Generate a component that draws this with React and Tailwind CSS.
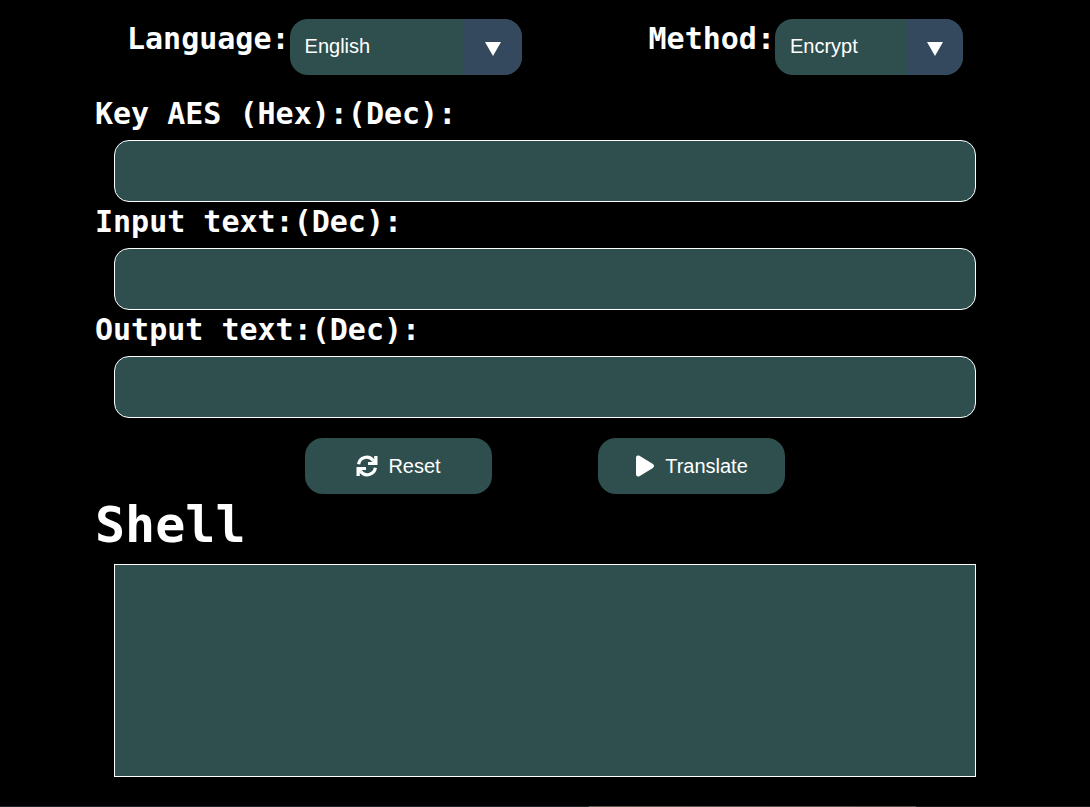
import { FaPlay } from "react-icons/fa6";

const mono = "font-['DejaVu_Sans_Mono',monospace] font-bold text-white";
const sans = "font-['Liberation_Sans',Arial,sans-serif] text-xl text-white";

function SyncIcon(props) {
  return (
    <svg viewBox="0 0 22 22" fill="none" {...props}>
      <path d="M2.6 9.2a8.2 8.2 0 0 1 14.6-3.7" stroke="currentColor" strokeWidth="3.2" />
      <path d="M21.5 1v9H12V7h3.6l2.6-2.6V1z" fill="currentColor" />
      <path d="M19.4 12.8a8.2 8.2 0 0 1-14.6 3.7" stroke="currentColor" strokeWidth="3.2" />
      <path d="M.5 21v-9H10v3H6.4l-2.6 2.6V21z" fill="currentColor" />
    </svg>
  );
}

function Dropdown({ id, label, options, width, arrowWidth }) {
  return (
    <div className="flex items-start">
      <label htmlFor={id} className={`${mono} text-[30px] leading-10`}>
        {label}
      </label>
      <div className={`relative h-14 overflow-hidden rounded-[18px] ${width}`}>
        <select
          id={id}
          className={`${sans} h-full w-full appearance-none bg-[#2f4f4f] px-[15px] pb-[2px] outline-none`}
        >
          {options.map((o) => (
            <option key={o}>{o}</option>
          ))}
        </select>
        <span
          aria-hidden="true"
          className={`pointer-events-none absolute inset-y-0 right-0 flex items-center justify-center bg-[#34495e] pt-1 ${arrowWidth}`}
        >
          <svg viewBox="0 0 16 14" className="h-[14px] w-4 fill-white">
            <path d="M0 0h16L8 14z" />
          </svg>
        </span>
      </div>
    </div>
  );
}

function Field({ id, label, readOnly }) {
  return (
    <div>
      <label htmlFor={id} className={`${mono} mb-[6px] block text-[30px] leading-10`}>
        {label}
      </label>
      <div className="px-[19px]">
        <input
          id={id}
          type="text"
          readOnly={readOnly}
          className={`${sans} block h-[62px] w-full rounded-[15px] border border-white bg-[#2f4f4f] px-4 outline-none`}
        />
      </div>
    </div>
  );
}

function ActionButton({ icon: Icon, iconClass, children }) {
  return (
    <button
      type="button"
      className={`${sans} flex h-14 w-[187px] items-center justify-center gap-[10px] rounded-[18px] bg-[#2f4f4f]`}
    >
      <Icon aria-hidden="true" className={iconClass} />
      {children}
    </button>
  );
}

export default function App() {
  return (
    <div className="flex min-h-screen flex-col bg-black">
      <header className="flex justify-evenly pt-[19px]">
        <Dropdown
          id="language"
          label="Language:"
          options={["English", "Español"]}
          width="w-[232px]"
          arrowWidth="w-[58px]"
        />
        <Dropdown
          id="method"
          label="Method:"
          options={["Encrypt", "Decrypt"]}
          width="w-[188px]"
          arrowWidth="w-[56px]"
        />
      </header>
      <main className="px-[95px] pt-[19px]">
        <Field id="key" label="Key AES (Hex):(Dec):" />
        <Field id="input" label="Input text:(Dec):" />
        <Field id="output" label="Output text:(Dec):" readOnly />
        <div className="mt-5 flex justify-center gap-[106px]">
          <ActionButton icon={SyncIcon} iconClass="size-[22px]">Reset</ActionButton>
          <ActionButton icon={FaPlay} iconClass="h-[24px] w-[20px]">Translate</ActionButton>
        </div>
        <h1 className={`${mono} mb-2 text-[50px] leading-[62px]`}>
          <label htmlFor="shell">Shell</label>
        </h1>
        <div className="px-[19px]">
          <textarea
            id="shell"
            readOnly
            className="block h-[213px] w-full resize-none border border-white bg-[#2f4f4f] p-4 font-['Liberation_Mono',monospace] text-xl text-white outline-none"
          />
        </div>
      </main>
      <footer className="mt-auto h-px bg-[linear-gradient(to_right,#1c2626_54%,#5f5a50_54%,#4f4a46_84%,#1e1c1c_84%)]" />
    </div>
  );
}
